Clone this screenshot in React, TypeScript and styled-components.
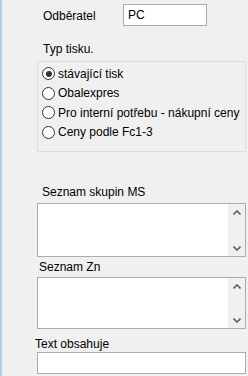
import React from "react";
import styled, { createGlobalStyle } from "styled-components";

const GlobalStyle = createGlobalStyle`
  html, body {
    margin: 0;
    padding: 0;
    background: #f0f0f0;
  }
  body {
    font-family: "Liberation Sans", Arial, sans-serif;
    font-size: 12px;
    color: #000;
  }
`;

const Page = styled.div`
  width: 248px;
  height: 376px;
  box-sizing: border-box;
  border-left: 2px solid #aecdef;
  padding-left: 35px;
  display: flex;
  flex-direction: column;
  overflow: hidden;
`;

const CustomerRow = styled.div`
  margin-top: 4px;
  height: 22px;
  display: flex;
  align-items: flex-start;
`;

const CustomerLabel = styled.span`
  width: 80px;
  padding-left: 6px;
  margin-top: 5px;
  line-height: 14px;
`;

const TextBox = styled.input<{ $width: number; $height: number }>`
  box-sizing: border-box;
  width: ${(p) => p.$width}px;
  height: ${(p) => p.$height}px;
  border: 1px solid #ababab;
  background: #fff;
  padding: 0 0 0 4px;
  margin: 0;
  font-family: "Liberation Sans", Arial, sans-serif;
  font-size: 12px;
  color: #000;
  outline: none;
`;

const Label = styled.div<{ $top: number; $left: number }>`
  margin-top: ${(p) => p.$top}px;
  margin-left: ${(p) => p.$left}px;
  line-height: 14px;
  height: 14px;
  white-space: nowrap;
`;

const Field = styled.div<{ $top: number }>`
  margin-top: ${(p) => p.$top}px;
  display: flex;
`;

const GroupBox = styled.div`
  margin-top: 5px;
  box-sizing: border-box;
  width: 209px;
  height: 91px;
  border: 1px solid #dcdcdc;
  padding: 2px 0 0 4px;
  display: flex;
  flex-direction: column;
`;

const RadioRow = styled.label`
  height: 19.5px;
  display: flex;
  align-items: center;
  gap: 3px;
  white-space: nowrap;
`;

const RadioCircle = styled.span<{ $checked?: boolean }>`
  box-sizing: border-box;
  width: 13px;
  height: 13px;
  border-radius: 50%;
  border: 1px solid #333;
  background: #fff;
  display: flex;
  align-items: center;
  justify-content: center;
  flex-shrink: 0;

  &::after {
    content: "";
    display: ${(p) => (p.$checked ? "block" : "none")};
    width: 6px;
    height: 6px;
    border-radius: 50%;
    background: #333;
  }
`;

const ListBox = styled.div<{ $height: number }>`
  box-sizing: border-box;
  width: 209px;
  height: ${(p) => p.$height}px;
  border: 1px solid #ababab;
  background: #fff;
  display: flex;
  justify-content: flex-end;
`;

const ScrollBar = styled.div`
  width: 17px;
  background: #f0f0f0;
  display: flex;
  flex-direction: column;
  justify-content: space-between;
  align-items: center;
  padding: 6px 0 5px;
`;

const radios = [
  { text: "stávající tisk", checked: true },
  { text: "Obalexpres" },
  { text: "Pro interní potřebu - nákupní ceny" },
  { text: "Ceny podle Fc1-3" },
];

const Chevron = ({ up }: { up?: boolean }) => (
  <svg width="8" height="5" viewBox="0 0 8 5">
    <path
      d={up ? "M0.5 4.5 L4 1 L7.5 4.5" : "M0.5 0.5 L4 4 L7.5 0.5"}
      fill="none"
      stroke="#606060"
      strokeWidth="1.6"
    />
  </svg>
);

const List = ({ height }: { height: number }) => (
  <ListBox $height={height}>
    <ScrollBar>
      <Chevron up />
      <Chevron />
    </ScrollBar>
  </ListBox>
);

export default function App() {
  return (
    <>
      <GlobalStyle />
      <Page>
        <CustomerRow>
          <CustomerLabel>Odběratel</CustomerLabel>
          <TextBox $width={84} $height={22} defaultValue="PC" />
        </CustomerRow>
        <Label $top={16} $left={6}>Typ tisku.</Label>
        <GroupBox>
          {radios.map((r) => (
            <RadioRow key={r.text}>
              <RadioCircle $checked={r.checked} />
              {r.text}
            </RadioRow>
          ))}
        </GroupBox>
        <Label $top={33} $left={5}>Seznam skupin MS</Label>
        <Field $top={4}>
          <List height={54} />
        </Field>
        <Label $top={3} $left={2}>Seznam Zn</Label>
        <Field $top={3}>
          <List height={52} />
        </Field>
        <Label $top={8} $left={-2}>Text obsahuje</Label>
        <Field $top={1}>
          <TextBox $width={209} $height={22} />
        </Field>
      </Page>
    </>
  );
}
